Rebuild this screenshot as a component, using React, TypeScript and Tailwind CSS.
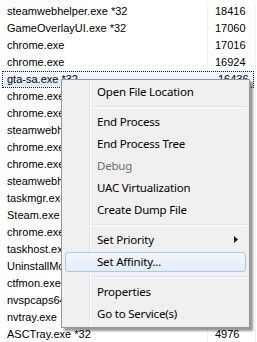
const ROWS: [string, string][] = [
  ["steamwebhelper.exe *32", "18416"],
  ["GameOverlayUI.exe *32", "17060"],
  ["chrome.exe", "17016"],
  ["chrome.exe", "16924"],
  ["gta-sa.exe *32", "16436"],
  ["chrome.exe", "16412"],
  ["chrome.exe", "16208"],
  ["steamwebhelper.exe *32", "15880"],
  ["chrome.exe", "15644"],
  ["chrome.exe", "15392"],
  ["steamwebhelper.exe *32", "14920"],
  ["taskmgr.exe", "14512"],
  ["Steam.exe *32", "13988"],
  ["chrome.exe", "12716"],
  ["taskhost.exe", "11040"],
  ["UninstallMonitor.exe *32", "9816"],
  ["ctfmon.exe", "8452"],
  ["nvspcaps64.exe", "7260"],
  ["nvtray.exe", "6112"],
  ["ASCTray.exe *32", "4976"],
];

type Item = { label: string; disabled?: boolean; sub?: boolean; hot?: boolean } | "sep";

const MENU: Item[] = [
  { label: "Open File Location" },
  "sep",
  { label: "End Process" },
  { label: "End Process Tree" },
  { label: "Debug", disabled: true },
  { label: "UAC Virtualization" },
  { label: "Create Dump File" },
  "sep",
  { label: "Set Priority", sub: true },
  { label: "Set Affinity...", hot: true },
  "sep",
  { label: "Properties" },
  { label: "Go to Service(s)" },
];

export default function App() {
  return (
    <div className="relative w-[257px] h-[342px] overflow-hidden bg-white">
      {/* process list */}
      <div className="pt-[3px] font-['Liberation_Sans',Arial,sans-serif] text-[11px] text-black">
        {ROWS.map(([name, pid], i) => {
          const selected = i === 4;
          return (
            <div
              key={i}
              className={
                "flex h-[17px] items-center " +
                (selected
                  ? "ml-[2px] w-[252px] border border-dotted border-[#222] bg-gradient-to-b from-[#f3f8fe] to-[#dde9f8]"
                  : "")
              }
            >
              <div className={"w-[207px] shrink-0 whitespace-nowrap " + (selected ? "pl-[4px]" : "pl-[7px]")}>
                {name}
              </div>
              <div className="h-full w-px shrink-0 bg-[#f0f0f0]" />
              <div className="w-[47px] shrink-0 pl-[7px]">{pid}</div>
              <div className="h-full w-px shrink-0 bg-[#f0f0f0]" />
            </div>
          );
        })}
      </div>

      {/* context menu */}
      <div className="absolute left-[61px] top-[79px] w-[189px] border border-[#979797] bg-[#f0f0f0] pt-px pb-[2px] px-[2px] shadow-[3px_3px_2px_rgba(0,0,0,0.4)] font-['Noto_Sans',sans-serif] text-[11.5px] tracking-[-0.2px] text-black">
        <div className="absolute left-[27px] top-0 bottom-0 w-px bg-[#e2e3e3]" />
        <div className="absolute left-[28px] top-0 bottom-0 w-px bg-white" />
        {MENU.map((it, i) =>
          it === "sep" ? (
            <div key={i} className="relative flex h-[8px] flex-col justify-center pl-[29px]">
              <div className="h-px bg-[#e0e0e0]" />
              <div className="h-px bg-white" />
            </div>
          ) : (
            <div key={i} className="relative flex h-[22px] items-center">
              {it.hot && (
                <div className="absolute inset-x-[1px] inset-y-px rounded-[3px] border border-[#a8caf0] bg-gradient-to-b from-[#f3f7fd] to-[#e4edf9]" />
              )}
              <span
                className={
                  "relative whitespace-nowrap pl-[33px] " + (it.disabled ? "text-[#6d6d6d]" : "")
                }
              >
                {it.label}
              </span>
              {it.sub && (
                <svg className="absolute right-[9px] top-[7px]" width="4" height="7" viewBox="0 0 4 7">
                  <path d="M0 0 L4 3.5 L0 7 Z" fill="#1a1a1a" />
                </svg>
              )}
            </div>
          )
        )}
      </div>
    </div>
  );
}
